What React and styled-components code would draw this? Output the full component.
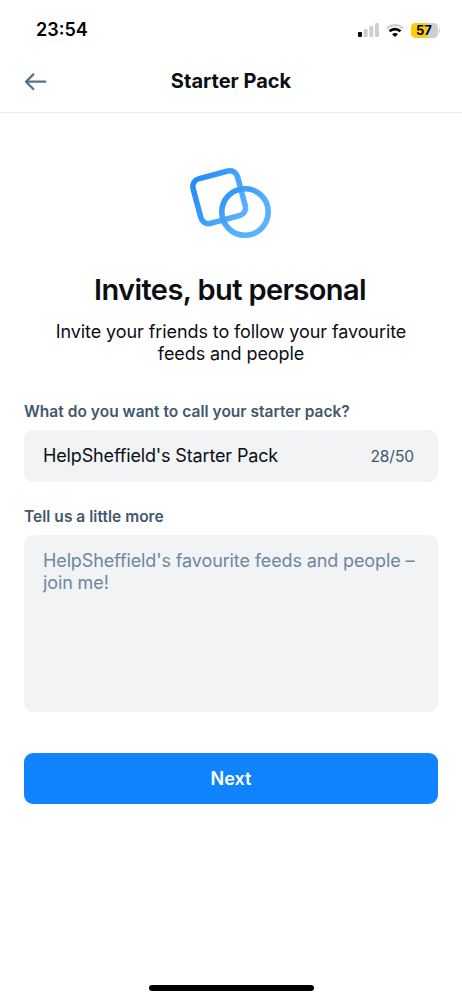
import React from "react";
import styled, { createGlobalStyle } from "styled-components";

const GlobalStyle = createGlobalStyle`
  * {
    box-sizing: border-box;
  }
  body {
    margin: 0;
    background: #fff;
    font-family: Inter, "Liberation Sans", sans-serif;
    color: #0b0f14;
  }
`;

const Screen = styled.div`
  width: 462px;
  height: 1000px;
  display: flex;
  flex-direction: column;
  overflow: hidden;
`;

const StatusBar = styled.div`
  height: 50px;
  padding: 10px 22px 0 36px;
  display: flex;
  align-items: center;
  justify-content: space-between;
`;

const Time = styled.span`
  font-size: 18px;
  font-weight: 600;
  line-height: 22px;
  color: #000;
`;

const StatusIcons = styled.div`
  display: flex;
  align-items: center;
  gap: 7px;
`;

const BatteryWrap = styled.div`
  display: flex;
  align-items: center;
  gap: 1px;
`;

const Battery = styled.div`
  width: 27px;
  height: 15px;
  border-radius: 4.5px;
  background: linear-gradient(90deg, #fdcd0d 60%, #cfcfcf 60%);
  color: #000;
  font-size: 13px;
  font-weight: 700;
  line-height: 14px;
  text-align: center;
`;

const BatteryTip = styled.div`
  width: 1.5px;
  height: 5px;
  border-radius: 0 2px 2px 0;
  background: #cfcfcf;
`;

const Header = styled.header`
  height: 63px;
  padding: 0 24px;
  display: grid;
  grid-template-columns: 40px 1fr 40px;
  align-items: center;
  border-bottom: 1px solid #e9ebee;
`;

const BackButton = styled.button`
  display: flex;
  padding: 0;
  border: 0;
  background: none;
`;

const HeaderTitle = styled.h1`
  margin: 0;
  font-size: 20px;
  font-weight: 750;
  line-height: 24px;
  text-align: center;
  white-space: nowrap;
`;

const Content = styled.main`
  flex: 1;
  padding: 54px 24px 0;
  display: flex;
  flex-direction: column;
`;

const Logo = styled.svg`
  display: block;
  align-self: center;
`;

const Heading = styled.h2`
  margin: 33px 0 0;
  padding-right: 2px;
  font-size: 29px;
  font-weight: 600;
  line-height: 36px;
  letter-spacing: -0.6px;
  text-align: center;
  white-space: nowrap;
`;

const Intro = styled.p`
  margin: 13px 0 0;
  font-size: 18px;
  line-height: 22px;
  letter-spacing: -0.09px;
  text-align: center;
  white-space: nowrap;
`;

const Field = styled.div`
  margin-top: ${({ $top }) => $top}px;
  display: flex;
  flex-direction: column;
  gap: 8px;
`;

const Label = styled.label`
  font-size: 15.5px;
  font-weight: 600;
  line-height: 20px;
  letter-spacing: 0.03px;
  color: #42576c;
  white-space: nowrap;
`;

const InputBox = styled.div`
  height: 52px;
  padding: 0 24px 0 19px;
  display: flex;
  align-items: center;
  justify-content: space-between;
  border-radius: 9px;
  background: #f1f3f5;
  font-size: 18px;
  line-height: 22px;
  letter-spacing: -0.15px;
`;

const Counter = styled.span`
  padding-top: 1px;
  font-size: 15.5px;
  letter-spacing: -0.05px;
  color: #42576c;
`;

const TextArea = styled.div`
  height: 177.5px;
  padding: 15.5px 19px;
  border-radius: 9px;
  background: #f1f3f5;
  color: #6f869f;
  font-size: 18px;
  line-height: 22px;
  letter-spacing: -0.12px;
  white-space: nowrap;
`;

const NextButton = styled.button`
  height: 51px;
  margin-top: 41.4px;
  padding: 0;
  border: 0;
  border-radius: 9px;
  background: #1083fe;
  color: #fff;
  font-family: inherit;
  font-size: 18px;
  font-weight: 600;
`;

const HomeIndicator = styled.div`
  align-self: center;
  width: 165px;
  height: 6px;
  margin-bottom: 9.5px;
  border-radius: 3px;
  background: #000;
`;

const SignalIcon = () => (
  <svg width="21" height="14" viewBox="0 0 21 14">
    <rect x="0" y="9" width="4" height="5" rx="1.2" fill="#000" />
    <rect x="5.7" y="6" width="4" height="8" rx="1.2" fill="#cfcfcf" />
    <rect x="11.3" y="3" width="4" height="11" rx="1.2" fill="#cfcfcf" />
    <rect x="17" y="0" width="4" height="14" rx="1.2" fill="#cfcfcf" />
  </svg>
);

const WifiIcon = () => (
  <svg width="18" height="13" viewBox="0 0 18 13" fill="none">
    <path d="M1 4.3C5.5 0 12.5 0 17 4.3" stroke="#cfcfcf" strokeWidth="2.3" />
    <path d="M3.5 7.2C6.6 4.3 11.4 4.3 14.5 7.2" stroke="#000" strokeWidth="2.7" />
    <path d="M6.1 10.2C7.8 8.6 10.2 8.6 11.9 10.2L9 13Z" fill="#000" />
  </svg>
);

const ArrowIcon = () => (
  <svg
    width="24"
    height="20"
    viewBox="0 0 24 20"
    fill="none"
    stroke="#56708f"
    strokeWidth="2.3"
    strokeLinecap="round"
    strokeLinejoin="round"
  >
    <path d="M21.3 10.7H2M9.3 3.4L2 10.7L9.3 18" />
  </svg>
);

const StarterPackLogo = () => (
  <Logo width="84" height="72" viewBox="0 0 84 72" fill="none" strokeWidth="5.6">
    <defs>
      <linearGradient id="squareFill" x1="0" y1="0" x2="1" y2="1">
        <stop offset="0" stopColor="#2489fb" />
        <stop offset="1" stopColor="#5ab5fd" />
      </linearGradient>
      <linearGradient id="circleFill" x1="0" y1="0" x2="1" y2="1">
        <stop offset="0" stopColor="#2c8ffb" />
        <stop offset="0.6" stopColor="#56b0fc" />
        <stop offset="1" stopColor="#5ab5fd" />
      </linearGradient>
    </defs>
    <rect
      x="7.2"
      y="7.2"
      width="46"
      height="46"
      rx="7.8"
      transform="rotate(-15 30.2 30.2)"
      stroke="url(#squareFill)"
    />
    <circle cx="56" cy="45" r="23.2" stroke="url(#circleFill)" />
  </Logo>
);

const App = () => {
  return (
    <Screen>
      <GlobalStyle />
      <StatusBar>
        <Time>23:54</Time>
        <StatusIcons>
          <SignalIcon />
          <WifiIcon />
          <BatteryWrap>
            <Battery>57</Battery>
            <BatteryTip />
          </BatteryWrap>
        </StatusIcons>
      </StatusBar>

      <Header>
        <BackButton aria-label="Back">
          <ArrowIcon />
        </BackButton>
        <HeaderTitle>Starter Pack</HeaderTitle>
      </Header>

      <Content>
        <StarterPackLogo />
        <Heading>Invites, but personal</Heading>
        <Intro>
          Invite your friends to follow your favourite
          <br />
          feeds and people
        </Intro>

        <Field $top={37}>
          <Label>What do you want to call your starter pack?</Label>
          <InputBox>
            <span>HelpSheffield's Starter Pack</span>
            <Counter>28/50</Counter>
          </InputBox>
        </Field>

        <Field $top={24.5}>
          <Label>Tell us a little more</Label>
          <TextArea>
            HelpSheffield's favourite feeds and people –
            <br />
            join me!
          </TextArea>
        </Field>

        <NextButton>Next</NextButton>
      </Content>

      <HomeIndicator />
    </Screen>
  );
};

export default App;
